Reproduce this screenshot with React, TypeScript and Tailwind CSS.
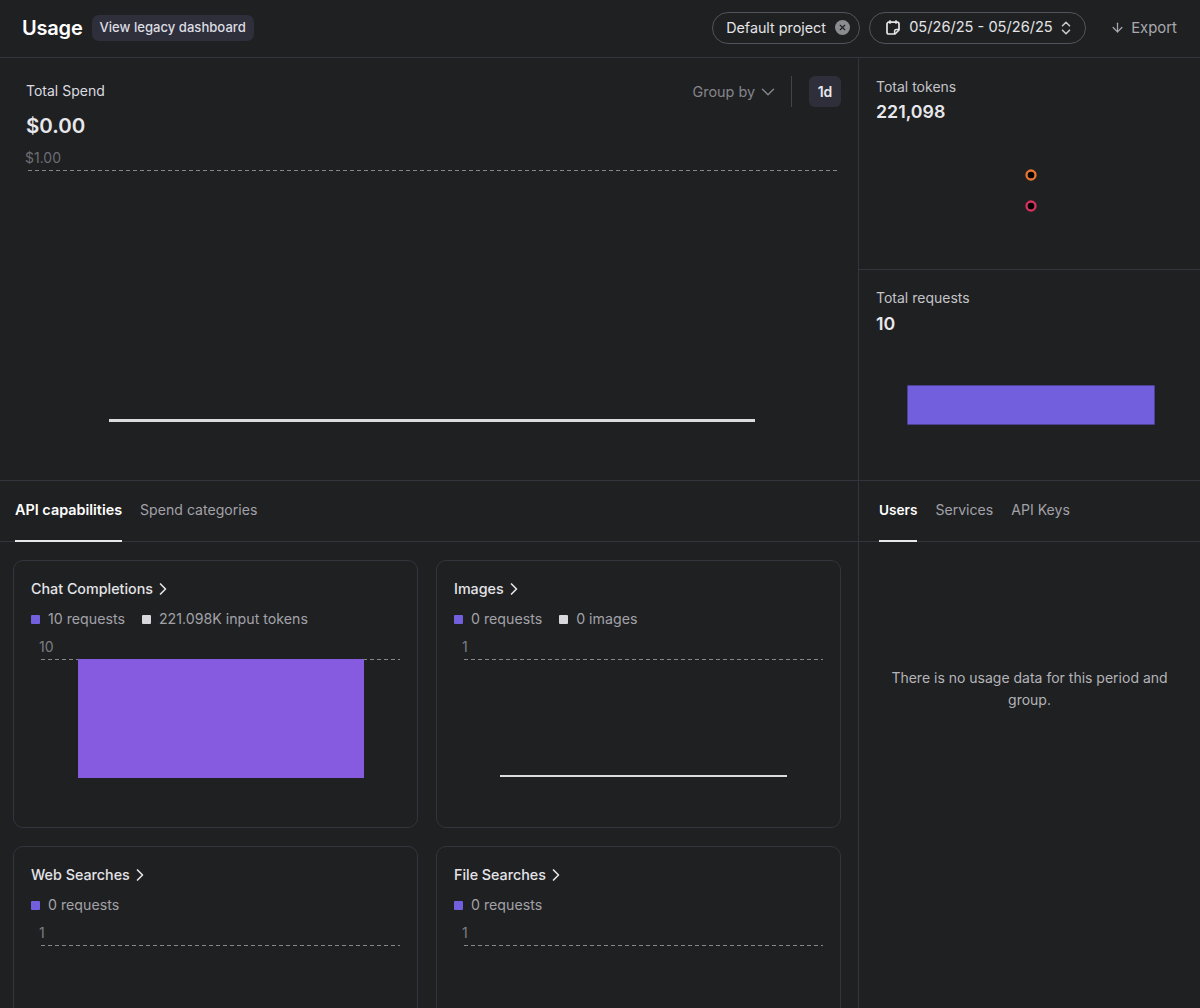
import React from 'react';
import { ArrowDown, ChevronDown, ChevronRight, X } from 'lucide-react';

type Legend = { label: string; color: string };

type CardProps = {
  title: string;
  legend: Legend[];
  top: string;
  // bar fills the plot, line sits flat on the floor
  mark?: 'bar' | 'line';
};

function CalendarIcon() {
  return (
    <svg width="16" height="16" viewBox="0 0 16 16" fill="none" className="text-[#e6e6ea]">
      <path
        d="M3.8 2.2h8.4a1.8 1.8 0 0 1 1.8 1.8v6l-4 4H3.8A1.8 1.8 0 0 1 2 12.2V4a1.8 1.8 0 0 1 1.8-1.8Z"
        stroke="currentColor"
        strokeWidth="1.7"
        strokeLinejoin="round"
      />
      <path d="M5 0.8v2.4M11 0.8v2.4" stroke="currentColor" strokeWidth="1.5" strokeLinecap="round" />
      <path d="M14 9.6h-2.6a1.8 1.8 0 0 0-1.8 1.8V14" stroke="currentColor" strokeWidth="1.5" />
    </svg>
  );
}

// up and down chevrons sit further apart than lucide's ChevronsUpDown
function UpDownIcon() {
  return (
    <svg width="12" height="16" viewBox="0 0 12 16" fill="none" className="ml-auto text-[#c8c8cc]">
      <path d="M2.5 5.8 6 2.3l3.5 3.5M2.5 10.2 6 13.7l3.5-3.5" stroke="currentColor" strokeWidth="1.6" strokeLinecap="round" strokeLinejoin="round" />
    </svg>
  );
}

function Tabs({ items, pad, activeSize }: { items: string[]; pad: string; activeSize: string }) {
  return (
    <div className={`flex h-[61px] shrink-0 gap-[18px] border-b border-[#33343e] ${pad}`}>
      {items.map((t, i) => (
        <div
          key={t}
          className={
            i === 0
              ? `flex h-[61px] items-center border-b-2 border-[#e8e8ec] pb-[1px] font-semibold text-white ${activeSize}`
              : 'flex h-[61px] items-center pb-[3px] text-[14.1px] text-[#a2a2a8]'
          }
        >
          {t}
        </div>
      ))}
    </div>
  );
}

function Card({ title, legend, top, mark }: CardProps) {
  return (
    <div className="h-[268px] rounded-[10px] border border-[#33343e] pl-[17px] pr-[17px] pt-[18px]">
      <div className="flex h-[20px] items-center text-[14.3px] font-medium text-[#e4e4e8]">
        {title}
        <ChevronRight size={20} strokeWidth={2} className="-ml-[3px] translate-x-[3px] text-[#e4e4e8]" />
      </div>
      <div className="mt-[10px] flex h-[20px] items-center gap-[17px] text-[14.2px] text-[#a2a2a8]">
        {legend.map((l) => (
          <span key={l.label} className="flex items-center gap-[8px]">
            <span className="h-[9px] w-[9px] rounded-[1px]" style={{ backgroundColor: l.color }} />
            {l.label}
          </span>
        ))}
      </div>
      <div className="mt-[8px] pl-[8px] text-[14px] leading-[20px] text-[#7d7d83]">{top}</div>
      <svg width="359" height="130" className="ml-[10px] mt-[2px] block">
        <line x1="0" x2="359" y1="0.5" y2="0.5" stroke="#85858a" strokeDasharray="4 3" />
        {mark === 'bar' && <rect x="37" y="0" width="286" height="119" fill="#875bdf" />}
        {mark === 'line' && <rect x="36" y="116" width="287" height="2" fill="#dcdce0" />}
      </svg>
    </div>
  );
}

export default function App() {
  return (
    <div
      className="flex h-[1008px] w-[1200px] flex-col overflow-hidden bg-[#1f2022] text-[#e4e4e8]"
      style={{ fontFamily: 'Inter, "Noto Sans", sans-serif' }}
    >
      <header className="flex h-[58px] shrink-0 items-center border-b border-[#33343e] pb-[2px] pl-[22px] pr-[23px]">
        <h1 className="text-[20px] font-semibold tracking-[-0.2px] text-white">Usage</h1>
        <span className="ml-[9px] flex h-[26px] items-center rounded-[7px] bg-[#2e2f3a] px-[8px] text-[13.1px] font-medium text-[#dcdce2]">
          View legacy dashboard
        </span>
        <div className="ml-auto flex h-[32px] w-[148px] items-center justify-between rounded-full border border-[#52535d] pl-[13px] pr-[9px] text-[14.3px] text-[#e4e4e8]">
          Default project
          <span className="flex h-[15px] w-[15px] items-center justify-center rounded-full bg-[#8b8b90]">
            <X size={9} strokeWidth={3} className="text-[#1f2022]" />
          </span>
        </div>
        <div className="ml-[9px] flex h-[32px] w-[217px] items-center rounded-full border border-[#52535d] pl-[15px] pr-[13px] text-[14.6px] text-[#e4e4e8]">
          <CalendarIcon />
          <span className="ml-[8px]">05/26/25 - 05/26/25</span>
          <UpDownIcon />
        </div>
        <div className="ml-[24px] flex items-center gap-[6px] pt-[1px] text-[14.9px] text-[#a8a8ae]">
          <ArrowDown size={15} strokeWidth={2} />
          Export
        </div>
      </header>

      <div className="flex h-[423px] shrink-0 border-b border-[#33343e]">
        <section className="w-[859px] shrink-0 border-r border-[#33343e] pl-[26px] pr-[17px] pt-[18px]">
          <div className="flex items-start justify-between">
            <div className="pt-[5px]">
              <div className="text-[14px] leading-[20px] text-[#dcdce0]">Total Spend</div>
              <div className="mt-[11px] text-[20.5px] font-semibold leading-[28px] text-[#e8e8ec]">$0.00</div>
            </div>
            <div className="flex h-[31px] items-center">
              <span className="text-[14.4px] text-[#85858b]">Group by</span>
              <ChevronDown size={22} strokeWidth={1.5} className="ml-[2px] text-[#85858b]" />
              <span className="ml-[12px] h-[31px] w-px bg-[#43444e]" />
              <span className="ml-[17px] flex h-[31px] w-[32px] items-center justify-center rounded-[6px] bg-[#2e2f3a] text-[14px] font-semibold text-[#e8e8ec]">
                1d
              </span>
            </div>
          </div>
          <div className="mt-[8px] ml-[-1px] text-[14px] leading-[20px] text-[#6c6c72]">$1.00</div>
          <svg width="812" height="260" className="ml-[2px] mt-[2px] block">
            <line x1="0" x2="810" y1="0.5" y2="0.5" stroke="#85858a" strokeDasharray="4 3" />
            <rect x="81" y="249" width="646" height="3" fill="#dcdce0" />
          </svg>
        </section>

        <aside className="flex min-w-0 flex-1 flex-col">
          <div className="h-[212px] shrink-0 border-b border-[#33343e] pl-[17px] pt-[19px]">
            <div className="text-[14px] leading-[20px] text-[#c4c4c8]">Total tokens</div>
            <div className="mt-[3px] text-[17.8px] font-semibold leading-[24px] text-[#e8e8ec]">221,098</div>
            <svg width="341" height="60" className="ml-[-17px] mt-[39px] block">
              <circle cx="172" cy="12" r="4.5" fill="#000" stroke="#e9742f" strokeWidth="2.3" />
              <circle cx="172" cy="43" r="4.5" fill="#000" stroke="#d6315f" strokeWidth="2.3" />
            </svg>
          </div>
          <div className="flex-1 pl-[17px] pt-[18px]">
            <div className="text-[14px] leading-[20px] text-[#c4c4c8]">Total requests</div>
            <div className="mt-[4px] text-[17.8px] font-semibold leading-[24px] text-[#e8e8ec]">10</div>
            <div className="ml-[31px] mt-[49px] h-[40px] w-[248px] rounded-[1px] border border-[#4b4296] bg-[#715fdd]" />
          </div>
        </aside>
      </div>

      <div className="flex min-h-0 flex-1">
        <section className="w-[859px] shrink-0 border-r border-[#33343e]">
          <Tabs items={['API capabilities', 'Spend categories']} pad="pl-[15px]" activeSize="text-[14.4px]" />
          <div className="grid grid-cols-[405px_405px] gap-[18px] pl-[13px] pt-[18px]">
            <Card
              title="Chat Completions"
              top="10"
              mark="bar"
              legend={[
                { label: '10 requests', color: '#715fdd' },
                { label: '221.098K input tokens', color: '#d8d8dc' },
              ]}
            />
            <Card
              title="Images"
              top="1"
              mark="line"
              legend={[
                { label: '0 requests', color: '#715fdd' },
                { label: '0 images', color: '#d8d8dc' },
              ]}
            />
            <Card title="Web Searches" top="1" legend={[{ label: '0 requests', color: '#715fdd' }]} />
            <Card title="File Searches" top="1" legend={[{ label: '0 requests', color: '#715fdd' }]} />
          </div>
        </section>
        <aside className="flex min-w-0 flex-1 flex-col">
          <Tabs items={['Users', 'Services', 'API Keys']} pad="pl-[20px]" activeSize="text-[13.6px]" />
          <p className="mx-auto mt-[125px] w-[300px] text-center text-[14px] leading-[22px] text-[#b4b4b8]">
            There is no usage data for this period and group.
          </p>
        </aside>
      </div>
    </div>
  );
}
